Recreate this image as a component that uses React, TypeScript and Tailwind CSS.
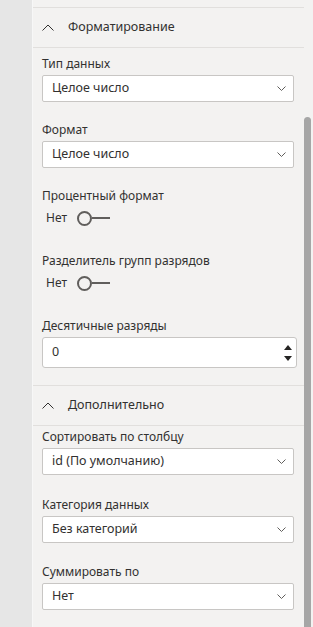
const font = { fontFamily: '"Noto Sans", "Open Sans", sans-serif' }

const ChevronUp = () => (
  <svg width="12" height="7" viewBox="0 0 12 7" fill="none">
    <path d="M0.5 6.5L6 1L11.5 6.5" stroke="#323130" strokeWidth="1" />
  </svg>
)

const ChevronDown = () => (
  <svg width="9" height="5" viewBox="0 0 9 5" fill="none">
    <path d="M0.5 0.5L4.5 4.5L8.5 0.5" stroke="#605e5c" strokeWidth="1" />
  </svg>
)

const SectionHeader = ({ title }: { title: string }) => (
  <div className="flex h-[41px] items-center border-y border-[#e1dfdd] pl-[9px]">
    <ChevronUp />
    <span className="ml-[14px] text-[12.5px] text-[#323130]">{title}</span>
  </div>
)

const Label = ({ children }: { children: string }) => (
  <div className="h-[16px] text-[12px] leading-[16px] text-[#323130]">{children}</div>
)

const Dropdown = ({ value }: { value: string }) => (
  <div className="mt-[3px] flex h-[27px] w-[252px] items-center justify-between rounded-[2px] border border-[#c8c6c4] bg-white pl-[9px] pr-[7px]">
    <span className="text-[12.5px] text-[#323130]">{value}</span>
    <ChevronDown />
  </div>
)

const Toggle = () => (
  <div className="mt-[6px] flex h-[16px] items-center pl-[4px]">
    <span className="text-[12px] text-[#323130]">Нет</span>
    <span className="ml-[10px] block h-[15px] w-[15px] rounded-full border-[2.5px] border-[#605e5c]" />
    <span className="block h-[2px] w-[18px] bg-[#605e5c]" />
  </div>
)

export default function App() {
  return (
    <div style={font} className="flex h-[627px] w-[313px] overflow-hidden bg-[#f3f2f1]">
      {/* left strip */}
      <div className="w-[33px] border-r border-[#f7f7f7] bg-[#e6e6e6]" />

      {/* pane */}
      <div className="flex w-[271px] flex-col pt-[7px]">
        <SectionHeader title="Форматирование" />

        <div className="flex flex-col pl-[9px] pt-[8px]">
          <Label>Тип данных</Label>
          <Dropdown value="Целое число" />

          <div className="mt-[20px]">
            <Label>Формат</Label>
          </div>
          <Dropdown value="Целое число" />

          <div className="mt-[20px]">
            <Label>Процентный формат</Label>
          </div>
          <Toggle />

          <div className="mt-[27px]">
            <Label>Разделитель групп разрядов</Label>
          </div>
          <Toggle />

          <div className="mt-[27px]">
            <Label>Десятичные разряды</Label>
          </div>
          <div className="mt-[3px] flex h-[31px] w-[255px] items-center justify-between rounded-[3px] border border-[#c8c6c4] bg-white pl-[9px] pr-[4px]">
            <span className="text-[12.5px] text-[#323130]">0</span>
            <div className="flex flex-col items-center gap-[6px]">
              <svg width="8" height="5" viewBox="0 0 8 5">
                <path d="M0 5L4 0L8 5Z" fill="#252423" />
              </svg>
              <svg width="8" height="5" viewBox="0 0 8 5">
                <path d="M0 0L4 5L8 0Z" fill="#252423" />
              </svg>
            </div>
          </div>
        </div>

        <div className="mt-[17px]">
          <SectionHeader title="Дополнительно" />
        </div>

        <div className="flex flex-col pl-[9px] pt-[3px]">
          <Label>Сортировать по столбцу</Label>
          <Dropdown value="id (По умолчанию)" />

          <div className="mt-[22px]">
            <Label>Категория данных</Label>
          </div>
          <Dropdown value="Без категорий" />

          <div className="mt-[21px]">
            <Label>Суммировать по</Label>
          </div>
          <Dropdown value="Нет" />
        </div>
      </div>

      {/* scrollbar */}
      <div className="flex w-[9px] flex-col pt-[117px]">
        <div className="w-[7px] flex-1 rounded-t-[4px] bg-[#a6a6a6]" />
      </div>
    </div>
  )
}
